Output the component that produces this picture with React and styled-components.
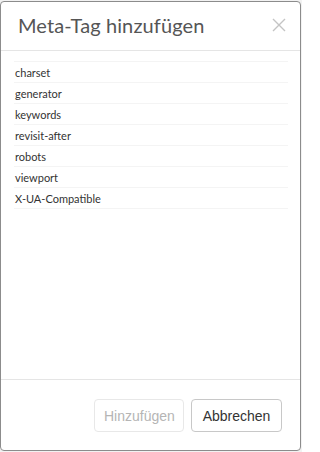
import React from "react";
import styled, { createGlobalStyle } from "styled-components";

const Global = createGlobalStyle`
  html, body { margin: 0; padding: 0; background: #fff; }
  body { width: 302px; height: 452px; overflow: hidden; }
`;

const Stage = styled.div`
  width: 302px;
  height: 452px;
  padding: 1px 1px 1px 0;
  box-sizing: border-box;
  background: #f2f2f2;
`;

const Modal = styled.div`
  width: 301px;
  height: 450px;
  box-sizing: border-box;
  background: #fff;
  border: 1px solid #8c8c8c;
  border-radius: 4px;
  display: flex;
  flex-direction: column;
  font-family: "Lato", "Open Sans", sans-serif;
`;

const Header = styled.div`
  height: 49px;
  box-sizing: border-box;
  border-bottom: 1px solid #e5e5e5;
  display: flex;
  align-items: center;
  justify-content: space-between;
  padding: 0 14px 2px 17px;
`;

const Title = styled.h4`
  margin: 0;
  font-size: 20px;
  font-weight: 400;
  color: #555;
  letter-spacing: 0.1px;
`;

const Close = styled.button`
  border: 0;
  background: none;
  padding: 0;
  width: 14px;
  height: 14px;
  display: flex;
  cursor: pointer;
`;

const Body = styled.div`
  flex: 1;
  padding: 10px 12px 0 13px;
`;

const List = styled.ul`
  list-style: none;
  margin: 0;
  padding: 0;
  border-top: 1px solid #f4f4f4;
`;

const Item = styled.li`
  height: 21px;
  box-sizing: border-box;
  border-bottom: 1px solid #f4f4f4;
  display: flex;
  align-items: center;
  padding-left: 1px;
  font-size: 11px;
  color: #333;
`;

const Footer = styled.div`
  border-top: 1px solid #e5e5e5;
  height: 71px;
  box-sizing: border-box;
  display: flex;
  justify-content: flex-end;
  align-items: flex-start;
  gap: 7px;
  padding: 19px 18px 0 0;
`;

const Button = styled.button`
  height: 33px;
  box-sizing: border-box;
  padding: 0 9px;
  border-radius: 4px;
  background: #fff;
  border: 1px solid ${(p) => (p.disabled ? "#e8e8e8" : "#c8c8c8")};
  color: ${(p) => (p.disabled ? "#b5b5b5" : "#333")};
  font-family: "Liberation Sans", Arial, sans-serif;
  font-size: 14px;
  width: ${(p) => p.w}px;
`;

const tags = [
  "charset",
  "generator",
  "keywords",
  "revisit-after",
  "robots",
  "viewport",
  "X-UA-Compatible",
];

export default function App() {
  return (
    <>
      <Global />
      <Stage>
        <Modal>
          <Header>
            <Title>Meta-Tag hinzufügen</Title>
            <Close aria-label="Schließen">
              <svg width="14" height="14" viewBox="0 0 14 14">
                <path d="M1 1L13 13M13 1L1 13" stroke="#c4c4c4" strokeWidth="1.4" />
              </svg>
            </Close>
          </Header>
          <Body>
            <List>
              {tags.map((t) => (
                <Item key={t}>{t}</Item>
              ))}
            </List>
          </Body>
          <Footer>
            <Button disabled w={90}>Hinzufügen</Button>
            <Button w={91}>Abbrechen</Button>
          </Footer>
        </Modal>
      </Stage>
    </>
  );
}
